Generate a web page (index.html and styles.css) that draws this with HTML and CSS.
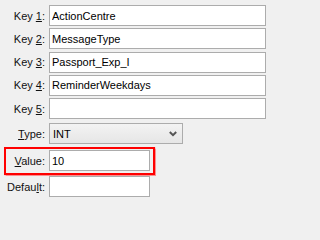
FILE: index.html
```html
<!DOCTYPE html>
<html>
<head>
<meta charset="utf-8">
<link rel="stylesheet" href="styles.css">
</head>
<body>
<div class="form">
  <div class="keys">
    <div class="row"><label class="lbl">Key <u>1</u>:</label><input class="field wide" type="text" value="ActionCentre"></div>
    <div class="row"><label class="lbl">Key <u>2</u>:</label><input class="field wide" type="text" value="MessageType"></div>
    <div class="row"><label class="lbl">Key <u>3</u>:</label><input class="field wide" type="text" value="Passport_Exp_I"></div>
    <div class="row"><label class="lbl">Key <u>4</u>:</label><input class="field wide" type="text" value="ReminderWeekdays"></div>
    <div class="row"><label class="lbl">Key <u>5</u>:</label><input class="field wide" type="text" value=""></div>
  </div>
  <div class="row type-row"><label class="lbl"><u>T</u>ype:</label>
    <div class="combo"><span class="combo-text">INT</span>
      <svg class="chev" width="8" height="6" viewBox="0 0 8 6"><path d="M0.8 1 L4 4.2 L7.2 1" fill="none" stroke="#555" stroke-width="2"/></svg>
    </div>
  </div>
  <div class="highlight">
    <div class="row"><label class="lbl lbl-in"><u>V</u>alue:</label><input class="field narrow" type="text" value="10"></div>
  </div>
  <div class="row default-row"><label class="lbl">Defau<u>l</u>t:</label><input class="field narrow" type="text" value=""></div>
</div>
</body>
</html>
```

FILE: styles.css
```css
html, body {
  margin: 0;
  padding: 0;
  background: #f0f0f0;
}
body {
  font-family: "Liberation Sans", Arial, sans-serif;
  font-size: 11px;
  color: #000;
}
.form {
  padding-top: 5px;
  display: flex;
  flex-direction: column;
}
.keys {
  display: flex;
  flex-direction: column;
  gap: 2.34px;
}
.row {
  display: flex;
  align-items: center;
  height: 21px;
}
.lbl {
  width: 45px;
  text-align: right;
  padding-right: 4px;
  box-sizing: border-box;
  flex: none;
  color: #111;
  margin-right: 0;
  white-space: nowrap;
}
.row .lbl {
  width: 49px;
  padding-right: 4px;
}
.lbl u {
  text-underline-offset: 1px;
}
.field {
  box-sizing: border-box;
  height: 21px;
  margin: 0;
  padding: 0 2px;
  border: 1px solid #acacac;
  background: #fff;
  font-family: "Liberation Sans", Arial, sans-serif;
  font-size: 11px;
  color: #000;
  outline: none;
  border-radius: 0;
}
.wide {
  width: 217px;
}
.narrow {
  width: 101px;
}
.type-row {
  margin-top: 4px;
}
.combo {
  box-sizing: border-box;
  width: 134px;
  height: 21px;
  border: 1px solid #acacac;
  background: linear-gradient(#f3f3f3, #e6e6e6);
  display: flex;
  align-items: center;
  justify-content: space-between;
  padding: 0 5px 0 3px;
}
.chev {
  display: block;
  margin-top: 1px;
}
.highlight {
  margin-top: 3px;
  margin-left: 4px;
  width: 151px;
  height: 28px;
  box-sizing: border-box;
  border: 2px solid #ff0000;
  box-shadow: 0 0 1px 0.5px rgba(255, 80, 80, 0.6);
  padding-top: 1px;
}
.highlight .row .lbl-in {
  width: 43px;
}
.default-row {
  margin-top: 1px;
}
```
